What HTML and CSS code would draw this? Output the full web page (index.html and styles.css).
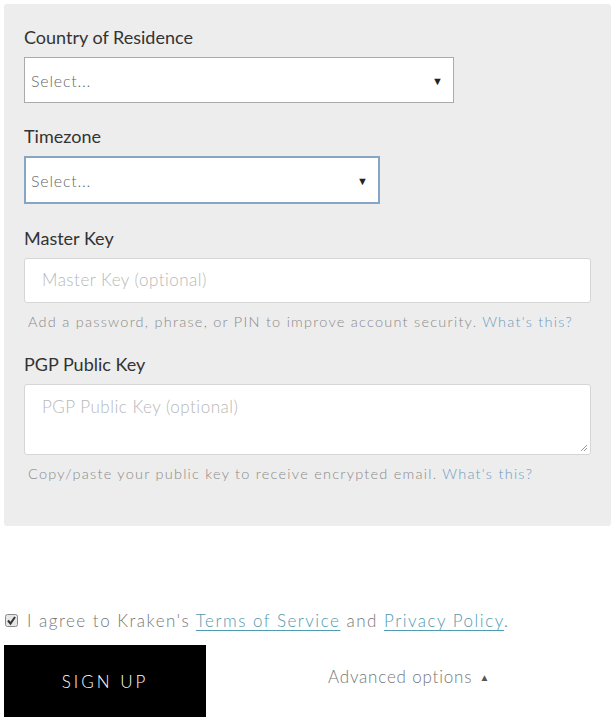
FILE: index.html
```html
<!DOCTYPE html>
<html>
<head>
<meta charset="utf-8">
<link rel="stylesheet" href="styles.css">
</head>
<body>
<div class="panel">
  <div class="field">
    <div class="label">Country of Residence</div>
    <div class="select select-wide"><span class="ph">Select...</span><span class="caret">&#9660;</span></div>
  </div>
  <div class="field">
    <div class="label">Timezone</div>
    <div class="select select-tz"><span class="ph">Select...</span><span class="caret">&#9660;</span></div>
  </div>
  <div class="field">
    <div class="label">Master Key</div>
    <div class="input"><span class="ph2">Master Key (optional)</span></div>
    <div class="help">Add a password, phrase, or PIN to improve account security. <a class="help-link">What's this?</a></div>
  </div>
  <div class="field">
    <div class="label">PGP Public Key</div>
    <div class="input textarea"><span class="ph2">PGP Public Key (optional)</span>
      <svg class="grip" width="10" height="10" viewBox="0 0 10 10"><path d="M9 3 L3 9 M9 6 L6 9" stroke="#999" stroke-width="1"/></svg>
    </div>
    <div class="help">Copy/paste your public key to receive encrypted email. <a class="help-link">What's this?</a></div>
  </div>
</div>
<div class="agree">
  <span class="checkbox"><svg width="13" height="13" viewBox="0 0 13 13"><rect x="0.5" y="0.5" width="12" height="12" rx="2" fill="#e6e6e6" stroke="#8a8a8a"/><path d="M3 6.5 L5.5 9.5 L10 3" fill="none" stroke="#333" stroke-width="2"/></svg></span>
  <span class="agree-text">I agree to Kraken's <a class="ulink">Terms of Service</a> and <a class="ulink">Privacy Policy</a>.</span>
</div>
<div class="actions">
  <div class="signup">SIGN UP</div>
  <div class="advanced">Advanced options <span class="up">&#9650;</span></div>
</div>
</body>
</html>
```
FILE: styles.css
```css
* { box-sizing: border-box; }
body {
  margin: 0;
  width: 616px;
  height: 722px;
  background: #fff;
  font-family: Lato, "Open Sans", sans-serif;
  color: #222;
  overflow: hidden;
}
.panel {
  margin: 4px 5px 0 4px;
  height: 522px;
  background: #ededed;
  border-radius: 3px;
  padding: 23px 20px 0 20px;
}
.field { margin-bottom: 23px; }
.field:nth-child(2) { margin-bottom: 24px; }
.label {
  font-size: 18px;
  line-height: 20px;
  color: #333;
  margin-bottom: 10px;
}
.select {
  position: relative;
  height: 46px;
  background: #fff;
  border: 1px solid #aaa;
  display: flex;
  align-items: center;
  padding-left: 6px;
}
.select-wide { width: 430px; }
.select-tz { width: 356px; height: 48px; border: 2px solid #86a6c8; padding-left: 5px; }
.ph {
  font-size: 16px;
  font-weight: 300;
  color: #666;
  letter-spacing: 0.8px;
}
.caret {
  margin-left: auto;
  margin-right: 10px;
  font-size: 11px;
  color: #222;
}
.input {
  position: relative;
  height: 45px;
  width: 567px;
  background: #fff;
  border: 1px solid #d6d6d6;
  border-radius: 3px;
  padding: 10px 0 0 17px;
}
.textarea { height: 71px; margin-top: 1px; padding-top: 11px; }
.ph2 {
  font-size: 17px;
  font-weight: 300;
  color: #b8b8b8;
  letter-spacing: 0.5px;
}
.grip { position: absolute; right: 2px; bottom: 2px; }
.help {
  margin-top: 10px;
  padding-left: 4px;
  font-size: 14.5px;
  line-height: 18px;
  letter-spacing: 1.25px;
  color: #8a8a8a;
  font-weight: 300;
}
.help-link { color: #6e9cc0; }
.agree {
  margin-top: 84px;
  display: flex;
  align-items: center;
  padding-left: 5px;
  height: 20px;
}
.checkbox { display: flex; width: 13px; height: 13px; margin-right: 9px; }
.agree-text {
  font-size: 17px;
  font-weight: 300;
  letter-spacing: 1.5px;
  color: #777;
}
.ulink {
  color: #4f9bb0;
  text-decoration: underline;
  text-underline-offset: 3px;
}
.actions {
  margin-top: 15px;
  display: flex;
  align-items: center;
}
.signup {
  margin-left: 4px;
  width: 202px;
  height: 72px;
  background: #000;
  color: #fff;
  font-size: 17px;
  letter-spacing: 3px;
  font-weight: 300;
  display: flex;
  align-items: center;
  justify-content: center;
}
.advanced {
  margin-left: 122px;
  margin-top: -10px;
  font-size: 17px;
  font-weight: 300;
  letter-spacing: 0.8px;
  color: #777;
}
.up { font-size: 10px; margin-left: 2px; color: #555; vertical-align: 2px; }
```
